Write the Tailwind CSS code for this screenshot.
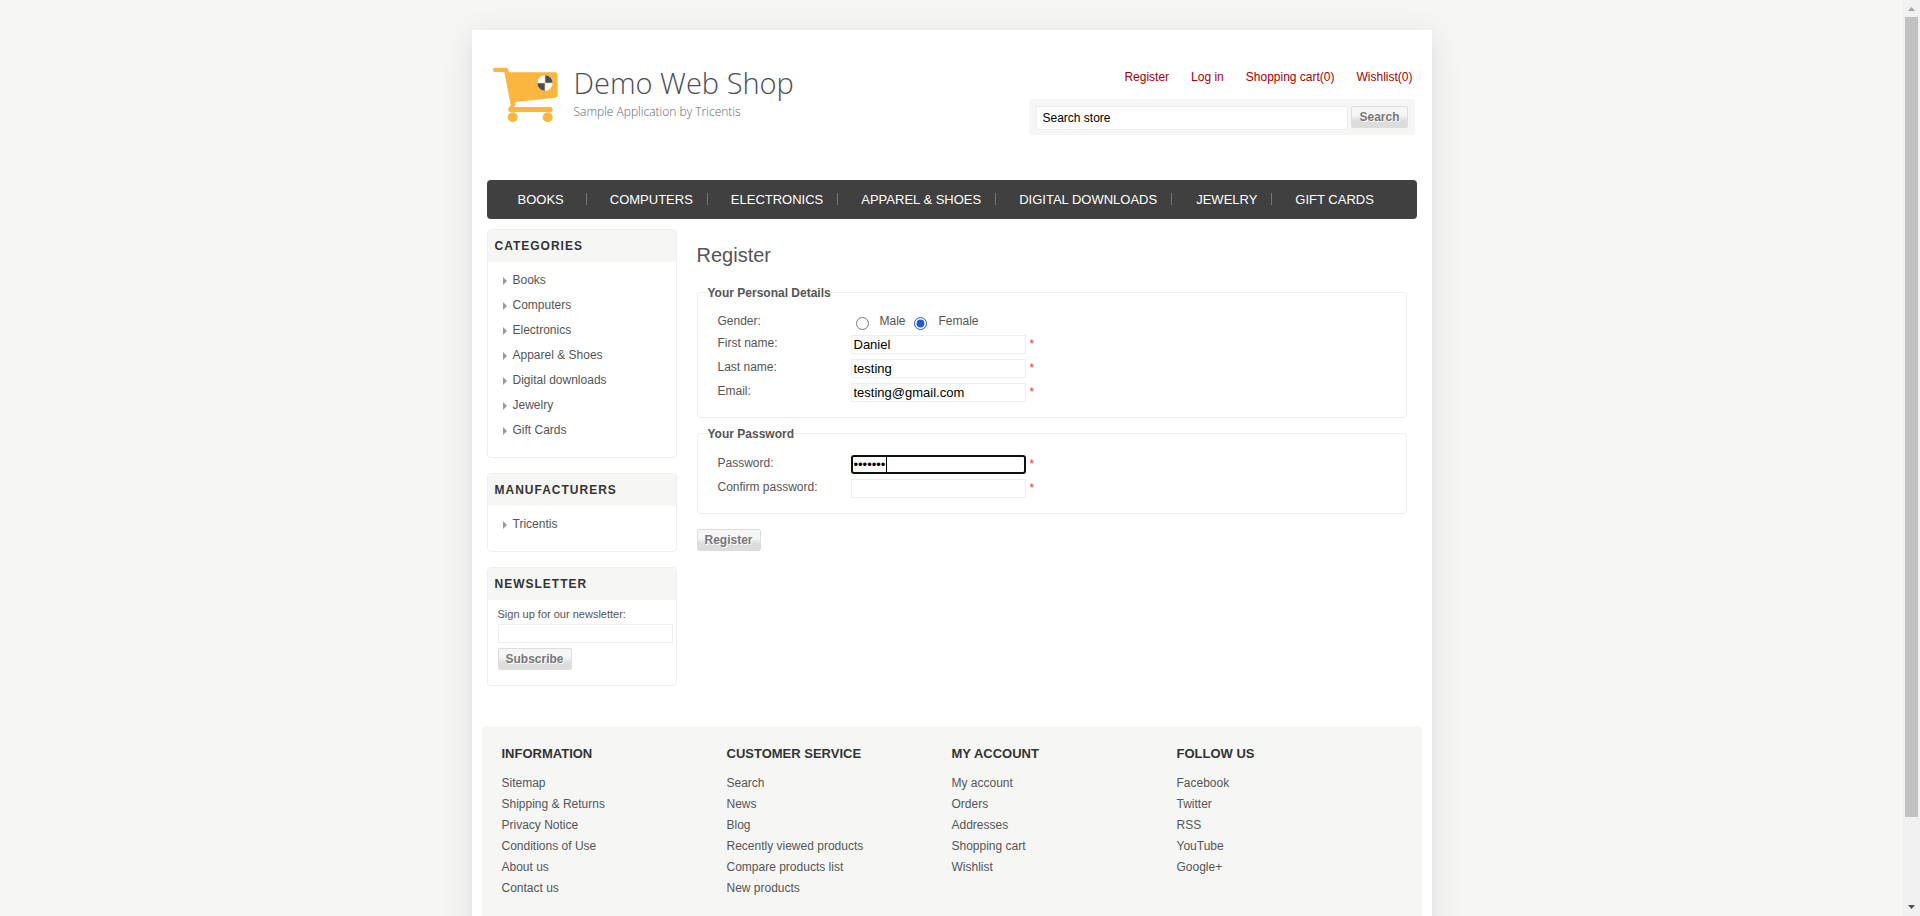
<!DOCTYPE html>
<html lang="en">
<head>
<meta charset="utf-8">
<meta name="viewport" content="width=device-width, initial-scale=1">
<title>Demo Web Shop. Register</title>
<script src="https://cdn.jsdelivr.net/npm/@tailwindcss/browser@4"></script>
</head>
<body class="flex h-screen overflow-hidden bg-[#f6f6f4] font-['Liberation_Sans',Arial,sans-serif] text-xs text-[#555]">
<div class="h-full min-w-0 flex-1 overflow-hidden pt-[30px]">
  <div class="mx-auto min-h-full w-full max-w-[960px] bg-white shadow-[0_6px_30px_rgba(0,0,0,0.11)]">
    <div class="px-[15px]">
      <header class="flex h-[150px] items-start justify-between pr-0.5 pl-[5px]">
        <a href="#" class="flex pt-9">
          <svg class="h-[58px] w-[68px]" viewBox="22 30 204 174" aria-hidden="true">
            <g fill="#fbb63f">
              <path d="M31 35H65Q70 35 71 40L73 49H212Q219 49 219 56V117Q219 124 212 125L93 138V146L88 153H198Q204 153 204 160.500Q204 168 198 168H77Q70 168 70 161Q70 156 75 152L78 146L59 48H31Q25 48 25 41.500Q25 35 31 35Z"/>
              <circle cx="84" cy="184" r="15"/><circle cx="189" cy="184" r="15"/>
            </g>
            <circle cx="181" cy="81" r="23" fill="#fff"/>
            <path d="M181 81V58A23 23 0 0 1 204 81ZM181 81V104A23 23 0 0 1 158 81Z" fill="#4b4d58"/>
            <path d="M181 58V104M158 81H204" stroke="#fbd08a" stroke-width="2"/>
          </svg>
          <span class="flex flex-col pl-[14px] font-['Open_Sans',sans-serif] font-light">
            <span class="text-[29px] leading-[34px] text-[#4b4d58]">Demo Web Shop</span>
            <span class="mt-0.5 text-xs leading-5 text-[#62646d]">Sample Application by Tricentis</span>
          </span>
        </a>
        <div class="w-[386px] pt-[39px]">
          <nav aria-label="Account" class="flex justify-end gap-[22px] pr-0.5 leading-4 text-[#a80000]">
            <a href="#">Register</a><a href="#">Log in</a><a href="#">Shopping cart(0)</a><a href="#">Wishlist(0)</a>
          </nav>
          <form class="mt-[14px] flex h-9 items-start gap-[3px] rounded-[3px] bg-[#f6f6f5] px-[7px] pt-[7px]">
            <input type="text" aria-label="Search store" value="Search store" class="h-6 min-w-0 flex-1 border border-[#eee] bg-white px-[6px] text-black">
            <button type="button" class="h-[22px] rounded-xs border border-[#ddd] bg-linear-to-b from-[#f6f6f6] from-40% to-[#dcdcdc] to-70% px-[7px] font-bold text-[#777] [text-shadow:1px_1px_0_#fff]">Search</button>
          </form>
        </div>
      </header>

      <nav aria-label="Categories" class="rounded-sm bg-[#404040] pl-[31px]">
        <ul class="flex h-[39px] items-center text-[13px] whitespace-nowrap text-white">
          <li class="flex items-center"><a href="#">BOOKS</a><span class="mr-[23px] ml-[22px] h-3 w-px bg-[#777]"></span></li>
          <li class="flex items-center"><a href="#">COMPUTERS</a><span class="mr-[23px] ml-[14px] h-3 w-px bg-[#777]"></span></li>
          <li class="flex items-center"><a href="#">ELECTRONICS</a><span class="mr-[23px] ml-[14px] h-3 w-px bg-[#777]"></span></li>
          <li class="flex items-center"><a href="#">APPAREL &amp; SHOES</a><span class="mr-[23px] ml-[14px] h-3 w-px bg-[#777]"></span></li>
          <li class="flex items-center"><a href="#">DIGITAL DOWNLOADS</a><span class="mr-6 ml-[14px] h-3 w-px bg-[#777]"></span></li>
          <li class="flex items-center"><a href="#">JEWELRY</a><span class="mr-[23px] ml-[14px] h-3 w-px bg-[#777]"></span></li>
          <li><a href="#">GIFT CARDS</a></li>
        </ul>
      </nav>

      <div class="mt-[10px] flex gap-5">
        <aside class="flex w-[190px] shrink-0 flex-col gap-[15px]">
          <section class="rounded-sm border border-[#eee] pb-[14px]">
            <h2 class="h-8 bg-[#f6f6f5] pl-[7px] font-bold leading-8 tracking-[1px] text-[#333]">CATEGORIES</h2>
            <ul class="pt-[6px] pl-[15px] leading-[25px]">
              <li class="flex items-center gap-[6px]"><span class="border-y-4 border-l-4 border-y-transparent border-l-[#999]"></span><a href="#">Books</a></li>
              <li class="flex items-center gap-[6px]"><span class="border-y-4 border-l-4 border-y-transparent border-l-[#999]"></span><a href="#">Computers</a></li>
              <li class="flex items-center gap-[6px]"><span class="border-y-4 border-l-4 border-y-transparent border-l-[#999]"></span><a href="#">Electronics</a></li>
              <li class="flex items-center gap-[6px]"><span class="border-y-4 border-l-4 border-y-transparent border-l-[#999]"></span><a href="#">Apparel &amp; Shoes</a></li>
              <li class="flex items-center gap-[6px]"><span class="border-y-4 border-l-4 border-y-transparent border-l-[#999]"></span><a href="#">Digital downloads</a></li>
              <li class="flex items-center gap-[6px]"><span class="border-y-4 border-l-4 border-y-transparent border-l-[#999]"></span><a href="#">Jewelry</a></li>
              <li class="flex items-center gap-[6px]"><span class="border-y-4 border-l-4 border-y-transparent border-l-[#999]"></span><a href="#">Gift Cards</a></li>
            </ul>
          </section>
          <section class="rounded-sm border border-[#eee] pb-[14px]">
            <h2 class="h-8 bg-[#f6f6f5] pl-[7px] font-bold leading-8 tracking-[1px] text-[#333]">MANUFACTURERS</h2>
            <ul class="pt-[6px] pl-[15px] leading-[25px]">
              <li class="flex items-center gap-[6px]"><span class="border-y-4 border-l-4 border-y-transparent border-l-[#999]"></span><a href="#">Tricentis</a></li>
            </ul>
          </section>
          <section class="rounded-sm border border-[#eee] pb-[15px]">
            <h2 class="h-8 bg-[#f6f6f5] pl-[7px] font-bold leading-8 tracking-[1px] text-[#333]">NEWSLETTER</h2>
            <form class="flex flex-col items-start pt-[6px] pl-[10px]">
              <label for="news" class="text-[11px] leading-4">Sign up for our newsletter:</label>
              <input id="news" type="text" class="mt-0.5 h-[19px] w-[175px] border border-[#eee] bg-white px-0.5 text-[13px] text-black">
              <button type="button" class="mt-[5px] h-[22px] rounded-xs border border-[#ddd] bg-linear-to-b from-[#f6f6f6] from-40% to-[#dcdcdc] to-70% px-[7px] font-bold text-[#777] [text-shadow:1px_1px_0_#fff]">Subscribe</button>
            </form>
          </section>
        </aside>

        <main class="min-w-0 flex-1 pt-3 pr-[10px]">
          <h1 class="mb-[14px] text-xl leading-7">Register</h1>
          <form>
            <fieldset class="rounded-sm border border-[#eee] pb-[15px] pl-5">
              <legend class="-ml-[10px] pt-0.5 font-bold leading-4">Your Personal Details</legend>
              <div role="radiogroup" aria-labelledby="gender" class="mt-[10px] flex h-6 items-start leading-5">
                <span id="gender" class="w-[133px]">Gender:</span>
                <input id="male" type="radio" name="gender" class="mt-[6px] ml-[5px] size-[13px] accent-[#2359cf]">
                <label for="male" class="ml-[11px]">Male</label>
                <input id="female" type="radio" name="gender" checked class="mt-[6px] ml-2 size-[13px] accent-[#2359cf]">
                <label for="female" class="ml-3">Female</label>
              </div>
              <div class="flex flex-col gap-[5px]">
                <div class="flex h-[19px] items-start leading-[17px]">
                  <label for="first" class="w-[133px]">First name:</label>
                  <input id="first" type="text" value="Daniel" class="h-[19px] w-[175px] border border-[#eee] bg-white px-0.5 text-[13px] text-black">
                  <span class="ml-1 leading-[18px] text-red-500">*</span>
                </div>
                <div class="flex h-[19px] items-start leading-[17px]">
                  <label for="last" class="w-[133px]">Last name:</label>
                  <input id="last" type="text" value="testing" class="h-[19px] w-[175px] border border-[#eee] bg-white px-0.5 text-[13px] text-black">
                  <span class="ml-1 leading-[18px] text-red-500">*</span>
                </div>
                <div class="flex h-[19px] items-start leading-[17px]">
                  <label for="email" class="w-[133px]">Email:</label>
                  <input id="email" type="text" value="testing@gmail.com" class="h-[19px] w-[175px] border border-[#eee] bg-white px-0.5 text-[13px] text-black">
                  <span class="ml-1 leading-[18px] text-red-500">*</span>
                </div>
              </div>
            </fieldset>
            <fieldset class="mt-[6px] rounded-sm border border-[#eee] pb-[15px] pl-5">
              <legend class="-ml-[10px] pt-0.5 font-bold leading-4">Your Password</legend>
              <div class="mt-[13px] flex flex-col gap-[5px]">
                <div class="flex h-[19px] items-start leading-[17px]">
                  <label for="pass" class="w-[133px]">Password:</label>
                  <span class="relative flex">
                    <input id="pass" type="password" value="testing" class="h-[19px] w-[175px] rounded-[3px] border-2 border-[#101010] bg-white px-px text-[13px] text-black">
                    <span class="absolute top-0.5 left-[35px] h-[15px] w-px bg-black"></span>
                  </span>
                  <span class="ml-1 leading-[18px] text-red-500">*</span>
                </div>
                <div class="flex h-[19px] items-start leading-[17px]">
                  <label for="confirm" class="w-[133px]">Confirm password:</label>
                  <input id="confirm" type="password" class="h-[19px] w-[175px] border border-[#eee] bg-white px-0.5 text-[13px] text-black">
                  <span class="ml-1 leading-[18px] text-red-500">*</span>
                </div>
              </div>
            </fieldset>
            <button type="button" class="mt-[15px] h-[22px] rounded-xs border border-[#ddd] bg-linear-to-b from-[#f6f6f6] from-40% to-[#dcdcdc] to-70% px-[7px] font-bold text-[#777] [text-shadow:1px_1px_0_#fff]">Register</button>
          </form>
        </main>
      </div>
    </div>

    <footer class="mx-[10px] mt-10 grid min-h-[260px] grid-cols-4 rounded-sm bg-[#f6f6f5] px-5 pt-[19px]">
      <section>
        <h2 class="mb-[10px] text-[13px] font-bold leading-[18px] text-[#333]">INFORMATION</h2>
        <ul class="leading-[21px]">
          <li><a href="#">Sitemap</a></li><li><a href="#">Shipping &amp; Returns</a></li><li><a href="#">Privacy Notice</a></li><li><a href="#">Conditions of Use</a></li><li><a href="#">About us</a></li><li><a href="#">Contact us</a></li>
        </ul>
      </section>
      <section>
        <h2 class="mb-[10px] text-[13px] font-bold leading-[18px] text-[#333]">CUSTOMER SERVICE</h2>
        <ul class="leading-[21px]">
          <li><a href="#">Search</a></li><li><a href="#">News</a></li><li><a href="#">Blog</a></li><li><a href="#">Recently viewed products</a></li><li><a href="#">Compare products list</a></li><li><a href="#">New products</a></li>
        </ul>
      </section>
      <section>
        <h2 class="mb-[10px] text-[13px] font-bold leading-[18px] text-[#333]">MY ACCOUNT</h2>
        <ul class="leading-[21px]">
          <li><a href="#">My account</a></li><li><a href="#">Orders</a></li><li><a href="#">Addresses</a></li><li><a href="#">Shopping cart</a></li><li><a href="#">Wishlist</a></li>
        </ul>
      </section>
      <section>
        <h2 class="mb-[10px] text-[13px] font-bold leading-[18px] text-[#333]">FOLLOW US</h2>
        <ul class="leading-[21px]">
          <li><a href="#">Facebook</a></li><li><a href="#">Twitter</a></li><li><a href="#">RSS</a></li><li><a href="#">YouTube</a></li><li><a href="#">Google+</a></li>
        </ul>
      </section>
    </footer>
  </div>
</div>

<!-- Window scrollbar -->
<div class="flex h-full w-[17px] shrink-0 flex-col items-center bg-[#f1f1f1]" aria-hidden="true">
  <svg class="size-[17px] shrink-0" viewBox="0 0 17 17"><path d="M5 11h7L8.500 7z" fill="#a3a3a3"/></svg>
  <div class="flex w-full flex-1 flex-col px-0.5">
    <div class="h-[800px] max-h-full bg-[#c1c1c1]"></div>
  </div>
  <svg class="size-[17px] shrink-0" viewBox="0 0 17 17"><path d="M5 6h7L8.500 10z" fill="#505050"/></svg>
</div>
</body>
</html>
